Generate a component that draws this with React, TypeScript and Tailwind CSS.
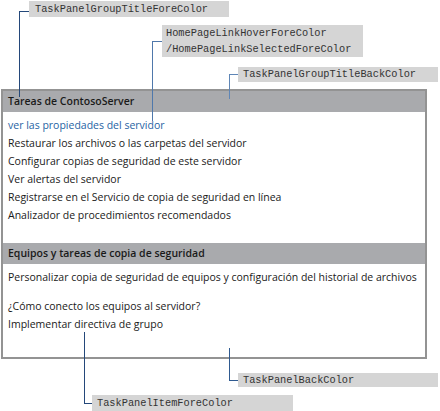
export default function App() {
  const body = { fontFamily: '"Open Sans", "Noto Sans", sans-serif' };
  const mono = { fontFamily: '"Liberation Mono", "DejaVu Sans Mono", monospace' };
  const group1 = [
    "Restaurar los archivos o las carpetas del servidor",
    "Configurar copias de seguridad de este servidor",
    "Ver alertas del servidor",
    "Registrarse en el Servicio de copia de seguridad en línea",
    "Analizador de procedimientos recomendados",
  ];
  return (
    <div className="relative w-[440px] h-[411px] bg-white overflow-hidden" style={body}>
      {/* task panel */}
      <div className="ml-[1px] mt-[89px] w-[426px] h-[270px] border-2 border-[#939393] bg-white text-[10.5px] text-[#1a1a1a]">
        <div className="h-[21px] bg-[#a9aaad] pl-[5px] flex items-center font-semibold text-[#1a1a1a]">
          Tareas de ContosoServer
        </div>
        <div className="pt-[5px] pb-[18px] pl-[5px]">
          <div className="h-[18px] flex items-center text-[#1f63a3]">ver las propiedades del servidor</div>
          {group1.map((t) => (
            <div key={t} className="h-[18px] flex items-center">{t}</div>
          ))}
        </div>
        <div className="h-[21px] bg-[#a9aaad] pl-[5px] flex items-center font-semibold">
          Equipos y tareas de copia de seguridad
        </div>
        <div className="pt-[5px] pl-[5px]">
          <div className="h-[18px] flex items-center">
            Personalizar copia de seguridad de equipos y configuración del historial de archivos
          </div>
          <div className="h-[18px] mt-[11px] flex items-center">¿Cómo conecto los equipos al servidor?</div>
          <div className="h-[18px] flex items-center">Implementar directiva de grupo</div>
        </div>
      </div>

      {/* callout lines */}
      <div className="absolute left-[19px] top-[11px] w-[10px] h-[86px] border-l border-t border-[#24487a]" />
      <div className="absolute left-[152px] top-[41px] w-[10px] h-[80px] border-l border-t border-[#4f78ab]" />
      <div className="absolute left-[229px] top-[74px] w-[9px] h-[25px] border-l border-t border-[#5f86b6]" />
      <div className="absolute left-[84px] top-[332px] w-[8px] h-[72px] border-l border-b border-[#24487a]" />
      <div className="absolute left-[229px] top-[348px] w-[9px] h-[33px] border-l border-b border-[#2f5a90]" />

      {/* callout labels */}
      <div style={mono} className="absolute left-[29px] top-[1px] w-[200px] h-[16px] bg-[#d5d5d5] pl-[6px] text-[10.3px] leading-[16px] text-[#333]">
        TaskPanelGroupTitleForeColor
      </div>
      <div style={mono} className="absolute left-[162px] top-[25px] w-[201px] h-[32px] bg-[#d5d5d5] pl-[4px] text-[10.3px] leading-[16px] text-[#333]">
        <div>HomePageLinkHoverForeColor</div>
        <div>/HomePageLinkSelectedForeColor</div>
      </div>
      <div style={mono} className="absolute left-[238px] top-[67px] w-[200px] h-[15px] bg-[#d5d5d5] pl-[5px] text-[10.3px] leading-[15px] text-[#333]">
        TaskPanelGroupTitleBackColor
      </div>
      <div style={mono} className="absolute left-[238px] top-[373px] w-[200px] h-[14px] bg-[#d5d5d5] pl-[5px] text-[10.3px] leading-[14px] text-[#333]">
        TaskPanelBackColor
      </div>
      <div style={mono} className="absolute left-[92px] top-[395px] w-[201px] h-[16px] bg-[#d5d5d5] pl-[5px] text-[10.3px] leading-[16px] text-[#333]">
        TaskPanelItemForeColor
      </div>
    </div>
  );
}
